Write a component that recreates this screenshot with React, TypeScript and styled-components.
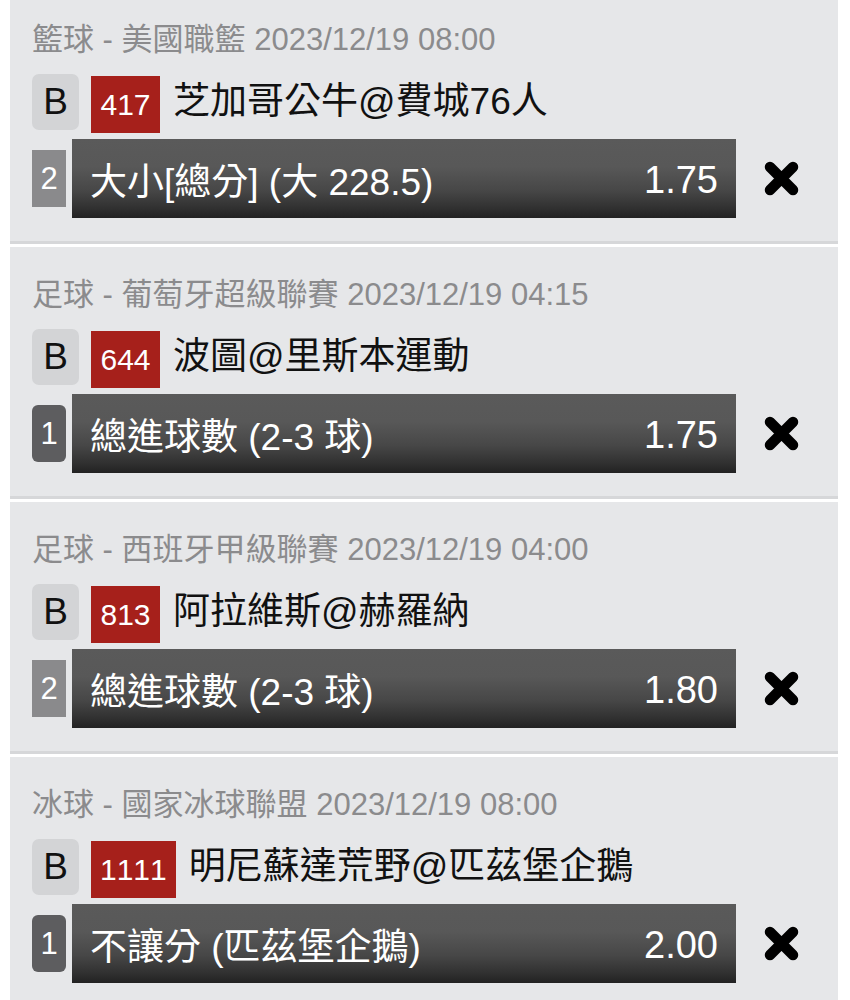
import React from 'react'
import styled, { createGlobalStyle } from 'styled-components'

const GlobalStyle = createGlobalStyle`
    html, body {
        margin: 0;
        padding: 0;
        background: #ffffff;
    }
    body {
        font-family: "Liberation Sans", "Noto Sans CJK TC", sans-serif;
        overflow: hidden;
    }
`

const latin = `"Liberation Sans", Arial, sans-serif`

type Bet = {
    league: string
    time: string
    code: string
    match: string
    seq: string
    dark: boolean
    pick: string
    odds: string
}

const bets: Bet[] = [
    { league: '籃球 - 美國職籃', time: '2023/12/19 08:00', code: '417', match: '芝加哥公牛@費城76人', seq: '2', dark: false, pick: '大小[總分] (大 228.5)', odds: '1.75' },
    { league: '足球 - 葡萄牙超級聯賽', time: '2023/12/19 04:15', code: '644', match: '波圖@里斯本運動', seq: '1', dark: true, pick: '總進球數 (2-3 球)', odds: '1.75' },
    { league: '足球 - 西班牙甲級聯賽', time: '2023/12/19 04:00', code: '813', match: '阿拉維斯@赫羅納', seq: '2', dark: false, pick: '總進球數 (2-3 球)', odds: '1.80' },
    { league: '冰球 - 國家冰球聯盟', time: '2023/12/19 08:00', code: '1111', match: '明尼蘇達荒野@匹茲堡企鵝', seq: '1', dark: true, pick: '不讓分 (匹茲堡企鵝)', odds: '2.00' },
]

const CloseIcon = () => (
    <svg width="37" height="35" viewBox="0 0 37 35">
        <path d="M7 6 L30 29 M30 6 L7 29" stroke="#000" strokeWidth="10.5" strokeLinecap="round" fill="none" />
    </svg>
)

const App = () => {
    return (
        <>
            <GlobalStyle />
            <List>
                {bets.map((b, i) => (
                    <Card key={i}>
                        <Header>{b.league} {b.time}</Header>
                        <MatchRow>
                            <TypeBadge>B</TypeBadge>
                            <Code>{b.code}</Code>
                            <MatchName>{b.match}</MatchName>
                        </MatchRow>
                        <BetRow>
                            <Seq $dark={b.dark}>{b.seq}</Seq>
                            <Bar>
                                <Pick>{b.pick}</Pick>
                                <Odds>{b.odds}</Odds>
                            </Bar>
                            <Remove><CloseIcon /></Remove>
                        </BetRow>
                    </Card>
                ))}
            </List>
        </>
    )
}

const List = styled.div`
    display: flex;
    flex-direction: column;
    gap: 3px;
    margin-top: -8px;
`

const Card = styled.div`
    margin: 0 12px 0 10px;
    height: 249px;
    box-sizing: content-box;
    background: #e6e7e9;
    border-bottom: 3px solid #d6d7d9;
    padding-left: 22px;
    display: flex;
    flex-direction: column;
`

const Header = styled.div`
    margin-top: 28px;
    height: 40px;
    line-height: 40px;
    font-size: 31px;
    color: #8b8b8d;
    white-space: nowrap;
`

const MatchRow = styled.div`
    margin-top: 14px;
    display: flex;
    align-items: flex-start;
    height: 59px;
`

const TypeBadge = styled.div`
    width: 47px;
    height: 56px;
    border-radius: 7px;
    background: #d3d4d6;
    color: #111;
    font-family: ${latin};
    font-size: 37px;
    display: flex;
    align-items: center;
    justify-content: center;
`

const Code = styled.div`
    margin: 2px 0 0 12px;
    height: 57px;
    min-width: 69px;
    box-sizing: border-box;
    padding: 0 9px;
    background: #a6201b;
    color: #fff;
    font-family: ${latin};
    font-kerning: none;
    font-size: 30px;
    display: flex;
    align-items: center;
    justify-content: center;
`

const MatchName = styled.div`
    margin-left: 13px;
    height: 56px;
    line-height: 56px;
    font-size: 37px;
    color: #111;
    white-space: nowrap;
`

const BetRow = styled.div`
    margin-top: 6px;
    display: flex;
    align-items: center;
    height: 79px;
`

const Seq = styled.div<{ $dark: boolean }>`
    width: 34px;
    height: 57px;
    border-radius: ${p => (p.$dark ? '6px' : '0')};
    background: ${p => (p.$dark ? '#5d5d5f' : '#8a8a8c')};
    color: #fff;
    font-family: ${latin};
    font-size: 31px;
    display: flex;
    align-items: center;
    justify-content: center;
`

const Bar = styled.div`
    margin-left: 6px;
    width: 664px;
    height: 79px;
    box-sizing: border-box;
    padding: 0 18px;
    background: linear-gradient(to bottom, #5a5a5a 0%, #585858 35%, #474747 65%, #303030 88%, #222 100%);
    color: #fff;
    display: flex;
    align-items: center;
    justify-content: space-between;
`

const Pick = styled.div`
    font-size: 37px;
    white-space: nowrap;
`

const Odds = styled.div`
    font-family: ${latin};
    font-size: 38px;
    padding-top: 4px;
`

const Remove = styled.div`
    margin-left: 27px;
    width: 37px;
    height: 35px;
    display: flex;
`

export default App
